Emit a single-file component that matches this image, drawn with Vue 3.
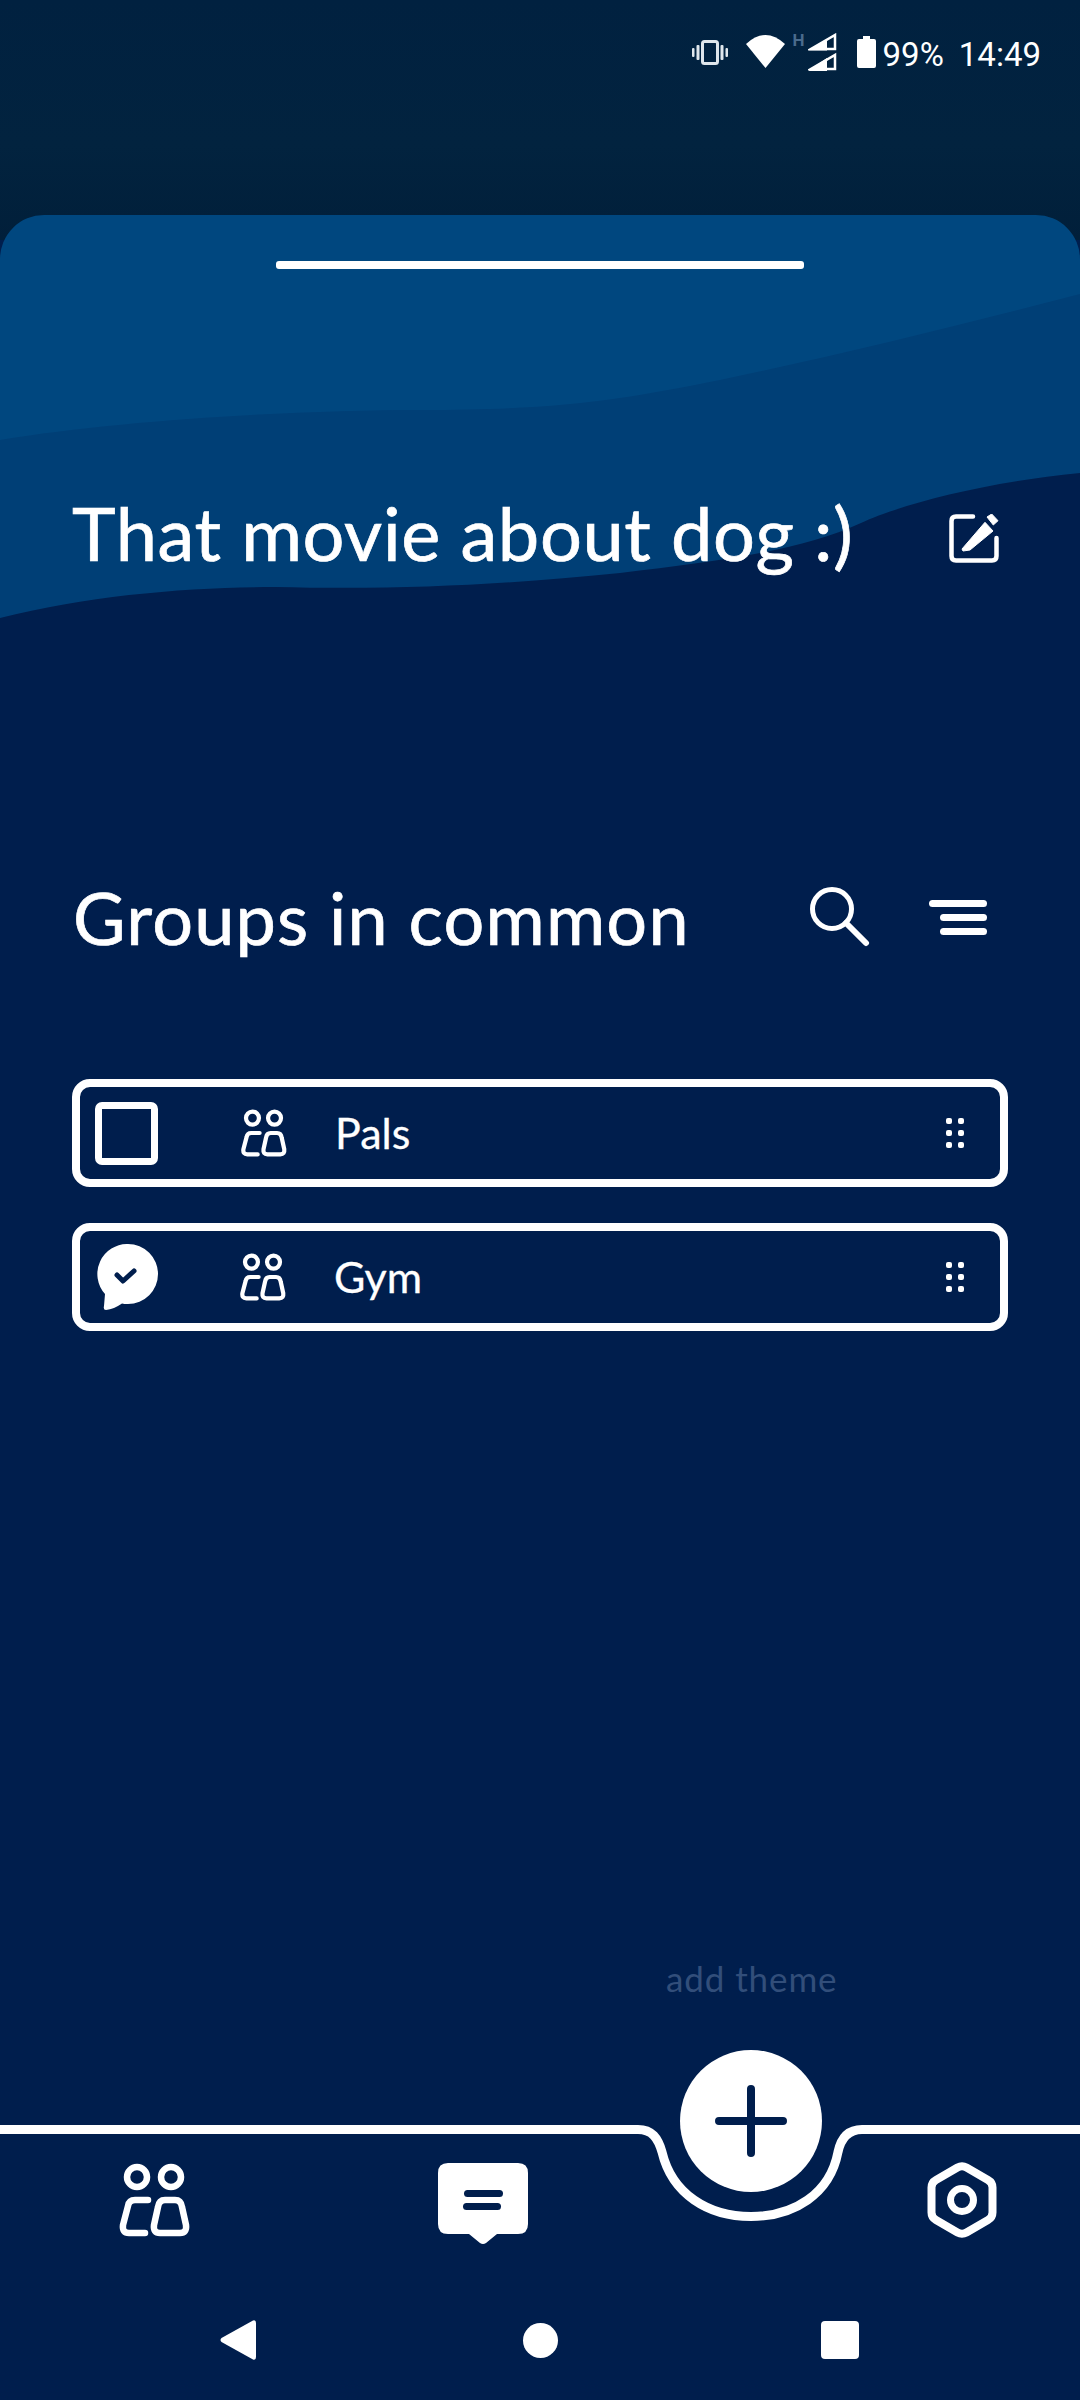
<template>
  <div class="screen">
    <!-- Shared people icon -->
    <svg class="defs" width="0" height="0">
      <symbol id="people" viewBox="0 0 72 74">
        <g fill="none" stroke="currentColor" stroke-width="6.5" stroke-linecap="round" stroke-linejoin="round">
          <circle cx="19" cy="14" r="10" />
          <circle cx="53" cy="14" r="10" />
          <path d="M30 37H17Q11 37 10 43L5 62Q4 70 11 70H27" />
          <path d="M47 37H57Q63 37 64 44L68 62Q69 70 62 70H42Q35 70 36 62L40 44Q41 37 47 37Z" />
        </g>
      </symbol>
    </svg>

    <!-- Status bar -->
    <header class="status-bar">
      <svg class="st-vibrate" viewBox="0 0 36 25" width="36" height="25">
        <rect x="10.5" y="1.5" width="15" height="22" rx="2" fill="none" stroke="#dfe6ec" stroke-width="3" />
        <rect x="4.500" y="5" width="3" height="15" rx="1" fill="#dfe6ec" />
        <rect x="28.500" y="5" width="3" height="15" rx="1" fill="#dfe6ec" />
        <rect x="0" y="8" width="2.500" height="9" rx="1" fill="#dfe6ec" />
        <rect x="33.500" y="8" width="2.500" height="9" rx="1" fill="#dfe6ec" />
      </svg>
      <svg class="st-wifi" viewBox="0 0 39 35" width="39" height="35">
        <path d="M0 11Q19.500 -7 39 11L19.500 35Z" fill="#fff" />
      </svg>
      <div class="st-signal">
        <span class="st-h">H</span>
        <svg viewBox="0 0 29 38" width="29" height="38">
          <path d="M27 2V16H3Z" fill="none" stroke="#fff" stroke-width="2.500" />
          <path d="M0 17.500L19 6V17.500Z" fill="#fff" />
          <path d="M27 22V36H3Z" fill="none" stroke="#fff" stroke-width="2.500" />
          <path d="M0 38L19 25V38Z" fill="#fff" />
        </svg>
      </div>
      <svg class="st-battery" viewBox="0 0 19 32" width="19" height="32">
        <path d="M6 0H13V3H17Q19 3 19 5V30Q19 32 17 32H2Q0 32 0 30V5Q0 3 2 3H6Z" fill="#fff" />
      </svg>
      <span class="st-text st-pct">99%</span>
      <span class="st-text st-time">14:49</span>
    </header>

    <main class="sheet">
      <svg class="waves" viewBox="0 0 1080 2185" preserveAspectRatio="none">
        <path d="M0 225C120 205 300 195 420 195C560 195 620 185 720 165C840 140 960 110 1080 79V420H0Z" fill="#003f76" />
        <path d="M0 403C90 380 190 372 275 372C400 375 500 370 620 358C720 346 800 336 861 308C900 290 980 268 1080 258V2185H0Z" fill="#001e4d" />
      </svg>

      <div class="handle"></div>

      <div class="title-row">
        <h1 class="title">That movie about dog :)</h1>
        <svg class="edit" viewBox="0 0 50 50" width="50" height="50">
          <path d="M24 2.500H7Q2.500 2.500 2.500 7V42Q2.500 46.500 7 46.500H43Q47.500 46.500 47.500 42V24" fill="none" stroke="#fff" stroke-width="4.500" stroke-linecap="round" />
          <path d="M13 35L36 8.300L44 17L21 36L14 37Z" fill="#fff" stroke="#fff" stroke-width="1" stroke-linejoin="round" />
          <path d="M38 3L42.700 0L49 6.700L44.300 11Z" fill="#fff" stroke="#fff" stroke-width="1" stroke-linejoin="round" />
        </svg>
      </div>

      <div class="heading-row">
        <h2 class="heading">Groups in common</h2>
        <svg class="search" viewBox="0 0 60 60" width="60" height="60">
          <circle cx="22" cy="22" r="19.500" fill="none" stroke="#fff" stroke-width="5" />
          <path d="M36 36L56 56" stroke="#fff" stroke-width="6" stroke-linecap="round" />
        </svg>
        <div class="sort">
          <span class="sort-line wide"></span>
          <span class="sort-line"></span>
          <span class="sort-line"></span>
        </div>
      </div>

      <ul class="group-list">
        <li v-for="group in groups" :key="group.name" class="group-row">
          <svg v-if="group.checked" class="check-chat" viewBox="0 0 62 66" width="62" height="66">
            <path d="M32 0A30 30 0 1 1 32 60Q28 60 26 59.500Q18 65 10 66Q7 66 8 62L9 50A30 30 0 0 1 32 0Z" fill="#fff" />
            <path d="M21 31L27 37L38 27" fill="none" stroke="#001e4d" stroke-width="5" stroke-linecap="round" stroke-linejoin="round" />
          </svg>
          <span v-else class="checkbox"></span>
          <svg class="group-icon"><use href="#people" /></svg>
          <span class="group-name">{{ group.name }}</span>
          <div class="drag">
            <span v-for="n in 6" :key="n" class="drag-dot"></span>
          </div>
        </li>
      </ul>

      <div class="spacer"></div>
      <div class="add-theme">add theme</div>

      <!-- Bottom bar with notch for the add button -->
      <nav class="tabbar">
        <svg class="notch" viewBox="0 0 1080 110" width="1080" height="110">
          <path d="M0 13.500H638C652 13.500 658 22 662 36C672 78 708 100.500 751 100.500C794 100.500 830 78 838 36C841 22 848 13.500 862 13.500H1080" fill="none" stroke="#fff" stroke-width="9" />
        </svg>
        <button class="fab" type="button">
          <svg viewBox="0 0 72 72" width="72" height="72">
            <path d="M4 36H68M36 4V68" stroke="#001e4d" stroke-width="8" stroke-linecap="round" />
          </svg>
        </button>
        <div class="tabs">
          <svg class="tab-people"><use href="#people" /></svg>
          <svg class="tab-chat" viewBox="0 0 90 81" width="90" height="81">
            <path d="M10 0H80Q90 0 90 10V61Q90 71 80 71H59L48 80Q45 82 42 80L31 71H10Q0 71 0 61V10Q0 0 10 0Z" fill="#fff" />
            <rect x="26" y="27" width="39" height="7" rx="3.500" fill="#001e4d" />
            <rect x="25" y="40" width="38" height="7" rx="3.500" fill="#001e4d" />
          </svg>
          <svg class="tab-settings" viewBox="0 0 70 76" width="70" height="76">
            <path d="M30.500 5.500Q35 3 39.500 5.500L61 18Q65.500 20.500 65.500 25.500V50.500Q65.500 55.500 61 58L39.500 70.500Q35 73 30.500 70.500L9 58Q4.500 55.500 4.500 50.500V25.500Q4.500 20.500 9 18Z" fill="none" stroke="#fff" stroke-width="8" />
            <circle cx="35" cy="38" r="11.500" fill="none" stroke="#fff" stroke-width="7" />
          </svg>
        </div>
      </nav>

      <!-- Android nav -->
      <div class="sys-nav">
        <svg viewBox="0 0 36 40" width="36" height="40">
          <path d="M33 0.500Q36 -0.500 36 3V37Q36 40.500 33 39.500L1.500 22Q-0.500 20 1.500 18Z" fill="#fff" />
        </svg>
        <span class="sys-home"></span>
        <span class="sys-recent"></span>
      </div>
    </main>
  </div>
</template>

<script setup>
const groups = [
  { name: 'Pals', checked: false },
  { name: 'Gym', checked: true },
]
</script>

<style>
html, body { margin: 0; background: #001e4d; }
</style>

<style scoped>
.screen {
  width: 1080px;
  height: 2400px;
  display: flex;
  flex-direction: column;
  overflow: hidden;
  background: linear-gradient(180deg, #012140 0%, #02233f 60%, #011f3a 100%);
  background-size: 100% 240px;
  background-repeat: no-repeat;
  background-color: #001e4d;
  color: #fff;
  font-family: "Lato", "Noto Sans", sans-serif;
}

.defs { position: absolute; }

.status-bar {
  height: 215px;
  box-sizing: border-box;
  flex-shrink: 0;
  display: flex;
  align-items: flex-start;
  justify-content: flex-end;
  padding: 33px 39px 0 0;
}
.st-vibrate { margin: 7px 18px 0 0; }
.st-wifi { margin-right: 8px; }
.st-signal { display: flex; margin-right: 20px; }
.st-h {
  font: 700 17px "Roboto", sans-serif;
  color: #4a6b8c;
  line-height: 15px;
  margin-right: 3px;
}
.st-battery { margin: 3px 7px 0 0; }
.st-text {
  font: 400 33px/38px "Roboto", sans-serif;
  color: #fff;
  margin-top: 3px;
}
.st-pct { margin-right: 15px; }

.sheet {
  position: relative;
  flex: 1;
  display: flex;
  flex-direction: column;
  background: #00477f;
  border-radius: 44px 44px 0 0;
  overflow: hidden;
}
.waves {
  position: absolute;
  inset: 0;
  width: 100%;
  height: 100%;
}

.handle {
  position: relative;
  width: 528px;
  height: 8px;
  margin: 46px auto 0;
  border-radius: 3px;
  background: #fff;
}

.title-row {
  position: relative;
  display: flex;
  align-items: center;
  justify-content: space-between;
  margin-top: 222px;
  padding: 0 81px 0 72px;
  height: 84px;
}
.title {
  margin: 0;
  font-size: 74px;
  font-weight: 400;
  letter-spacing: 0.6px;
  -webkit-text-stroke: 0.7px #fff;
  line-height: 84px;
  white-space: nowrap;
}
.edit { margin-top: 12px; }

.heading-row {
  position: relative;
  display: flex;
  align-items: center;
  margin-top: 300px;
  padding-left: 73px;
  height: 84px;
}
.heading {
  margin: 0;
  flex: 1;
  font-size: 72px;
  font-weight: 400;
  letter-spacing: 1.2px;
  -webkit-text-stroke: 0.7px #fff;
  line-height: 84px;
  white-space: nowrap;
}
.search { margin-right: 59px; }
.sort {
  display: flex;
  flex-direction: column;
  align-items: flex-end;
  gap: 7px;
  width: 58px;
  margin-right: 93px;
}
.sort-line {
  width: 47px;
  height: 7px;
  border-radius: 4px;
  background: #fff;
}
.sort-line.wide { width: 58px; }

.group-list {
  position: relative;
  list-style: none;
  margin: 120px 72px 0;
  padding: 0;
  display: flex;
  flex-direction: column;
  gap: 36px;
}
.group-row {
  display: flex;
  align-items: center;
  height: 108px;
  box-sizing: border-box;
  border: 8px solid #fff;
  border-radius: 18px;
  padding: 0 36px 0 15px;
}
.checkbox {
  width: 63px;
  height: 63px;
  box-sizing: border-box;
  border: 7px solid #fff;
  border-radius: 7px;
  margin-right: 82px;
  flex-shrink: 0;
}
.check-chat {
  margin-left: 1px;
  margin-right: 81px;
  flex-shrink: 0;
}
.group-icon {
  width: 47px;
  height: 48px;
  margin-right: 48px;
  flex-shrink: 0;
}
.group-name {
  flex: 1;
  font-size: 43px;
  -webkit-text-stroke: 0.3px #fff;
  line-height: 48px;
}
.drag {
  display: grid;
  grid-template-columns: 6px 6px;
  grid-auto-rows: 6px;
  gap: 6px;
}
.drag-dot {
  border-radius: 2px;
  background: #fff;
}

.spacer { flex: 1; }

.add-theme {
  position: relative;
  margin-left: 666px;
  margin-bottom: 2px;
  font-size: 35px;
  letter-spacing: 0.9px;
  line-height: 40px;
  color: #324e7a;
}

.tabbar {
  position: relative;
  height: 160px;
}
.notch {
  position: absolute;
  left: 0;
  top: 116px;
}
.fab {
  position: absolute;
  left: 680px;
  top: 50px;
  width: 142px;
  height: 142px;
  padding: 0;
  border: none;
  border-radius: 50%;
  background: #fff;
  display: flex;
  align-items: center;
  justify-content: center;
}
.tabs {
  position: absolute;
  left: 118px;
  top: 163px;
  display: flex;
  align-items: flex-start;
}
.tab-people {
  width: 72px;
  height: 74px;
  margin-right: 248px;
}
.tab-settings { margin-left: 399px; margin-top: -1px; }

.sys-nav {
  position: relative;
  margin-top: 144px;
  margin-bottom: 24px;
  height: 72px;
  display: flex;
  align-items: center;
  padding-left: 220px;
}
.sys-home {
  width: 35px;
  height: 35px;
  border-radius: 50%;
  background: #fff;
  margin-left: 267px;
}
.sys-recent {
  width: 38px;
  height: 38px;
  border-radius: 4px;
  background: #fff;
  margin-left: 263px;
}
</style>
